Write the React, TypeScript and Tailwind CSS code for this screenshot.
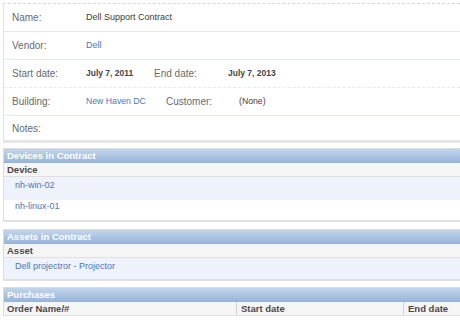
import React from 'react'

const font = { fontFamily: '"Liberation Sans", Arial, sans-serif' }

function Field({ label, children, dashed }: { label: string; children?: React.ReactNode; dashed?: boolean }) {
  return (
    <div className={`flex items-center h-[28px] border-b border-[#e3e9f6] ${dashed ? '[border-bottom-style:dashed]' : ''}`}>
      <div className="w-[82px] pl-[8px] text-[10px] text-[#6a6a6a]">{label}</div>
      <div className="flex-1 flex items-center">{children}</div>
    </div>
  )
}

function SectionHeader({ title }: { title: string }) {
  return (
    <div className="h-[14px] bg-gradient-to-b from-[#c3d5ec] to-[#96b3d8] text-white font-bold text-[9.5px] pl-[3px] leading-[14px]">
      {title}
    </div>
  )
}

function SubHeader({ children }: { children: React.ReactNode }) {
  return (
    <div className="h-[14px] flex bg-[radial-gradient(#d9d9d9_0.7px,#f5f5f5_0.7px)] bg-[length:2px_2px] text-[#4a4a4a] font-bold text-[9.5px] leading-[13px] border-b border-[#e0e0e0]">
      {children}
    </div>
  )
}

export default function App() {
  return (
    <div className="w-[460px] h-[320px] bg-white overflow-hidden pt-[3px]" style={font}>
      {/* Contract details */}
      <div className="ml-[3px] border-l border-[#e2e2e2] border-t border-t-[#d6d6d6] [border-top-style:dashed] border-b-[3px] border-b-[#e6e6e6]">
        <Field label="Name:">
          <span className="text-[9px] text-[#3a3a3a]">Dell Support Contract</span>
        </Field>
        <Field label="Vendor:">
          <span className="text-[9px] text-[#4b78b8]">Dell</span>
        </Field>
        <Field label="Start date:" dashed>
          <span className="w-[68px] text-[8.5px] font-bold text-[#444]">July 7, 2011</span>
          <span className="w-[74px] text-[10px] text-[#6a6a6a]">End date:</span>
          <span className="text-[8.5px] font-bold text-[#444]">July 7, 2013</span>
        </Field>
        <Field label="Building:">
          <span className="w-[80px] text-[8.7px] text-[#4b78b8]">New Haven DC</span>
          <span className="w-[73px] text-[10px] text-[#6a6a6a]">Customer:</span>
          <span className="text-[8.7px] text-[#444]">(None)</span>
        </Field>
        <div className="flex items-center h-[24px]">
          <div className="pl-[8px] text-[10px] text-[#6a6a6a]">Notes:</div>
        </div>
      </div>

      {/* Devices */}
      <div className="ml-[3px] mt-[5px] border-l border-t border-[#dcdcdc] border-b-[2px] border-b-[#e0e0e0]">
        <SectionHeader title="Devices in Contract" />
        <SubHeader><span className="pl-[3px]">Device</span></SubHeader>
        <div className="h-[23px] bg-[#eef2fa] pl-[11px] pt-[2px] text-[9px] text-[#4b78b8]">nh-win-02</div>
        <div className="h-[20px] bg-white pl-[11px] text-[9px] text-[#4b78b8]">nh-linux-01</div>
      </div>

      {/* Assets */}
      <div className="ml-[3px] mt-[7px] border-l border-t border-[#dcdcdc] border-b-[2px] border-b-[#e0e0e0]">
        <SectionHeader title="Assets in Contract" />
        <SubHeader><span className="pl-[3px]">Asset</span></SubHeader>
        <div className="h-[21px] bg-[#eef2fa] pl-[11px] pt-[2px] text-[9px] text-[#4b78b8]">Dell projectror - Projector</div>
      </div>

      {/* Purchases */}
      <div className="ml-[3px] mt-[6px] border-l border-t border-[#dcdcdc]">
        <SectionHeader title="Purchases" />
        <SubHeader>
          <span className="w-[233px] pl-[3px] border-r border-[#d4d4d4]">Order Name/#</span>
          <span className="w-[167px] pl-[4px] border-r border-[#d4d4d4]">Start date</span>
          <span className="pl-[4px]">End date</span>
        </SubHeader>
      </div>
    </div>
  )
}
